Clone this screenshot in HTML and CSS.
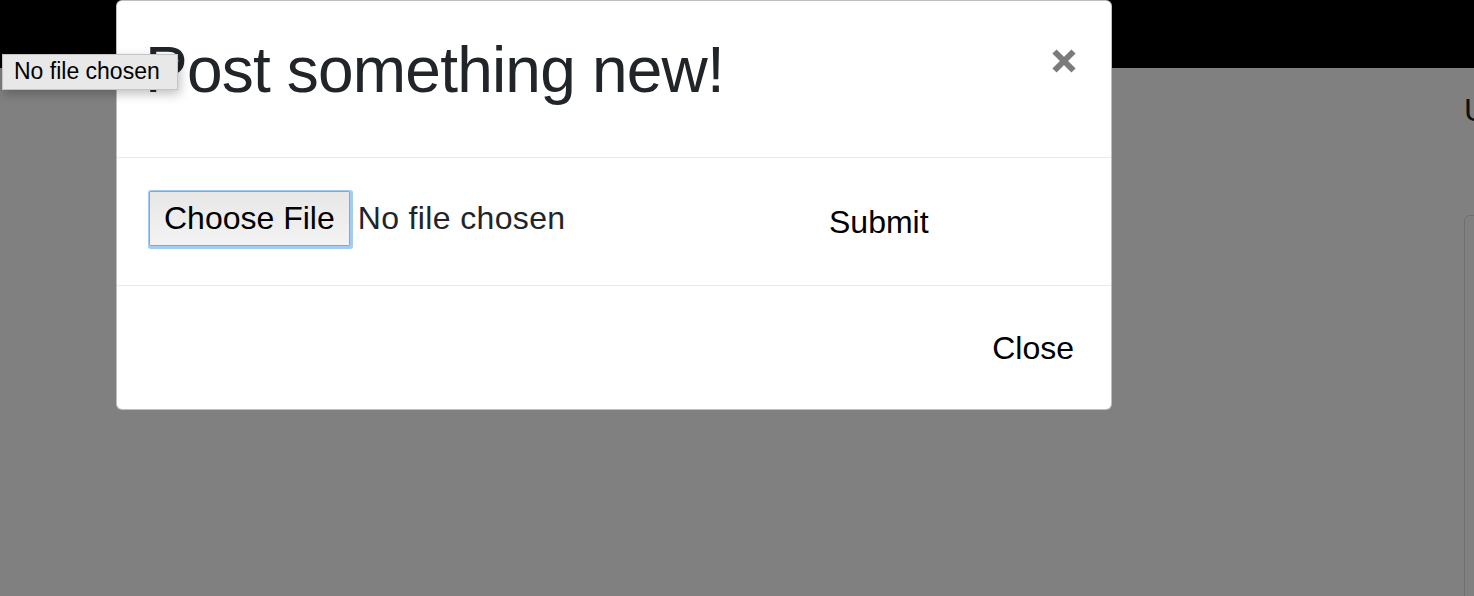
FILE: index.html
```html
<!DOCTYPE html>
<html lang="en">
<head>
<meta charset="utf-8">
<title>Post something new!</title>
<link rel="stylesheet" href="styles.css">
</head>
<body>
  <header class="navbar"></header>
  <main class="page">
    <h2 class="page-title">Upload</h2>
    <div class="card"></div>
  </main>

  <div class="modal">
    <div class="modal-header">
      <h1 class="modal-title">Post something new!</h1>
      <button class="close-btn" type="button" aria-label="Close">
        <svg width="24" height="26" viewBox="0 0 24 26" aria-hidden="true">
          <path d="M2.5 3.5 L21.5 22.5 M21.5 3.5 L2.5 22.5" stroke="#7b7b7b" stroke-width="6" fill="none"/>
        </svg>
      </button>
    </div>
    <form class="modal-body">
      <div class="file-field">
        <button class="file-btn" type="button">Choose File</button>
        <span class="file-name">No file chosen</span>
      </div>
      <button class="text-btn submit-btn" type="submit">Submit</button>
    </form>
    <div class="modal-footer">
      <button class="text-btn" type="button">Close</button>
    </div>
  </div>

  <div class="tooltip">No file chosen</div>
</body>
</html>
```

FILE: styles.css
```css
html, body {
  margin: 0;
  padding: 0;
}

body {
  width: 1474px;
  height: 596px;
  overflow: hidden;
  background: #808080;
  font-family: "Liberation Sans", Arial, sans-serif;
  position: relative;
}

.navbar {
  height: 68px;
  background: #000;
}

.page {
  padding-left: 1464px;
  display: flex;
  flex-direction: column;
}

.page-title {
  margin: 24px 0 0 0;
  font-size: 32px;
  line-height: 37px;
  font-weight: 400;
  color: #111;
  white-space: nowrap;
}

.card {
  margin-top: 86px;
  height: 400px;
  width: 300px;
  border: 1px solid #6f6f6f;
  border-radius: 6px;
}

.modal {
  position: absolute;
  left: 116px;
  top: 0;
  width: 996px;
  box-sizing: border-box;
  background: #fff;
  border: 1px solid rgba(0, 0, 0, 0.25);
  border-radius: 6px;
  display: flex;
  flex-direction: column;
}

.modal-header {
  display: flex;
  justify-content: space-between;
  align-items: flex-start;
  padding: 31px 35px 48px 28px;
  border-bottom: 1px solid #e9ecef;
}

.modal-title {
  margin: 0;
  font-size: 64px;
  line-height: 77px;
  font-weight: 400;
  letter-spacing: -0.8px;
  color: #212529;
}

.close-btn {
  margin-top: 16px;
  padding: 0;
  border: 0;
  background: none;
  display: flex;
}

.modal-body {
  margin: 0;
  display: flex;
  align-items: flex-start;
  padding: 33px 32px 39px 32px;
  border-bottom: 1px solid #e9ecef;
}

.file-field {
  width: 680px;
  display: flex;
  align-items: center;
}

.file-btn {
  font-family: "Liberation Sans", Arial, sans-serif;
  font-size: 32px;
  line-height: 37px;
  color: #000;
  padding: 8px 14px;
  border: 1px solid #a2a2a2;
  border-radius: 1px;
  background: linear-gradient(#e7e7e7, #f3f3f3);
  box-shadow: 1px 1px 0 2px #a3ccf3;
}

.file-name {
  margin-left: 8px;
  font-size: 32px;
  line-height: 37px;
  letter-spacing: 0.35px;
  color: #212529;
}

.text-btn {
  font-family: "Liberation Sans", Arial, sans-serif;
  font-size: 32px;
  line-height: 37px;
  color: #000;
  padding: 0;
  border: 0;
  background: none;
}

.submit-btn {
  margin-top: 13px;
}

.modal-footer {
  display: flex;
  justify-content: flex-end;
  padding: 44px 37px 42px 32px;
}

.tooltip {
  position: absolute;
  left: 2px;
  top: 54px;
  width: 176px;
  height: 36px;
  box-sizing: border-box;
  padding: 3px 0 0 11px;
  background: #e8e8e8;
  border: 1px solid #c4c4c4;
  box-shadow: 2px 4px 10px rgba(0, 0, 0, 0.25);
  font-size: 23px;
  line-height: 26px;
  color: #000;
  white-space: nowrap;
}
```
